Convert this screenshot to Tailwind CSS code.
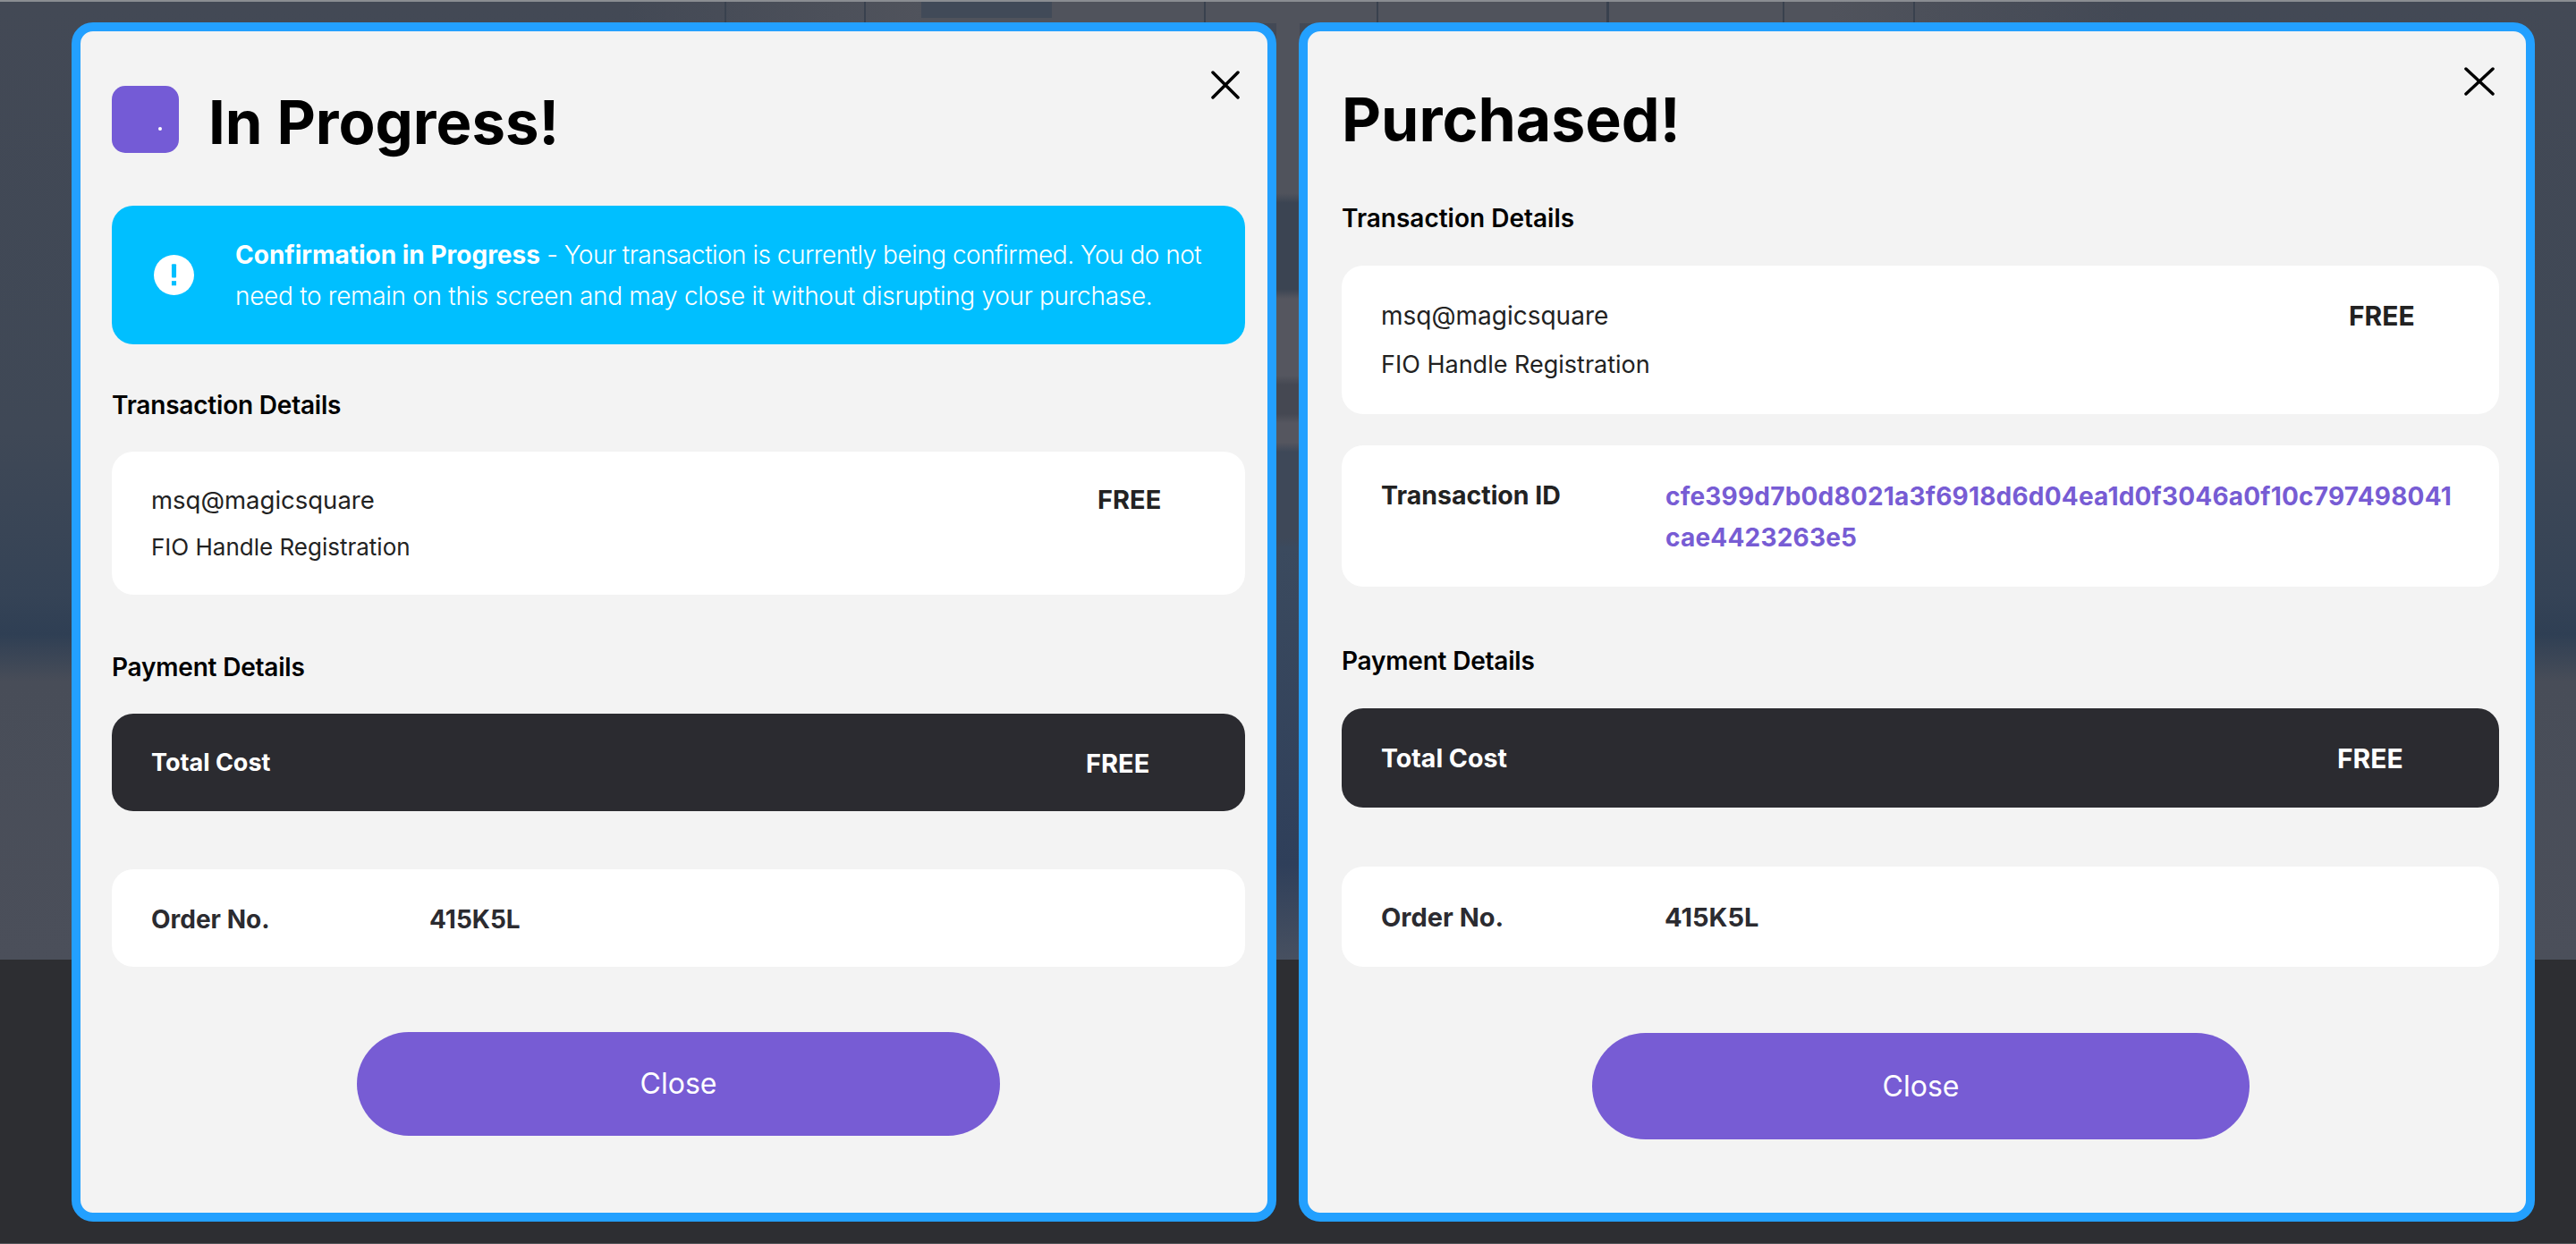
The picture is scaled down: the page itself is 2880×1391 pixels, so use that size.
<!DOCTYPE html>
<html lang="en">
<head>
    <meta charset="UTF-8">
    <title>Magic Square FIO Handle</title>
    <script src="https://cdn.jsdelivr.net/npm/@tailwindcss/browser@4"></script>
</head>
<body class="w-[2880px] h-[1391px] overflow-hidden bg-[#2d2e32] font-['Inter',sans-serif] relative">

    <!-- blurred page behind the modals -->
    <div class="absolute inset-x-0 top-0 h-[1073px] border-t-2 border-[#8a8d92] bg-[linear-gradient(180deg,#434955_0%,#3f4856_45%,#354356_62%,#2f3f54_66%,#484d58_71%,#4b4f5a_100%)]"></div>
    <div class="absolute left-[700px] right-[500px] top-[2px] h-[24px] bg-[linear-gradient(90deg,transparent,#50535c_20%,#50535c_80%,transparent)]"></div>
    <div class="absolute left-[1427px] w-[26px] top-[2px] h-[1071px] bg-[linear-gradient(180deg,#50535c_0%,#50535c_20%,#3b4452_21%,#3b4452_30%,#55565f_31%,#55565f_39%,#454852_40%,#454852_43%,#55565f_44%,#55565f_46%,#3e4858_47%,#3e4858_56%,#3b4a5e_57%,#2f3f5a_90%,#475060_100%)]"></div>
    <div class="absolute bottom-0 inset-x-0 h-px bg-[#55575b]"></div>

    <!-- bits of the page that show above the modals -->
    <div class="absolute left-[1030px] top-[2px] w-[146px] h-[18px] bg-[#414a58]"></div>
    <div class="absolute left-[810px] top-[2px] w-[2px] h-[24px] bg-[#39414e]"></div>
    <div class="absolute left-[966px] top-[2px] w-[2px] h-[24px] bg-[#39414e]"></div>
    <div class="absolute left-[1346px] top-[2px] w-[2px] h-[24px] bg-[#39414e]"></div>
    <div class="absolute left-[1539px] top-[2px] w-[2px] h-[24px] bg-[#39414e]"></div>
    <div class="absolute left-[1796px] top-[2px] w-[3px] h-[24px] bg-[#39414e]"></div>
    <div class="absolute left-[1993px] top-[2px] w-[2px] h-[24px] bg-[#39414e]"></div>
    <div class="absolute left-[2139px] top-[2px] w-[2px] h-[24px] bg-[#39414e]"></div>

    <div class="relative flex pl-[80px] pt-[25px] gap-[25px]">

        <!-- left modal -->
        <div class="relative w-[1347px] h-[1341px] border-[10px] border-[#23a0ff] rounded-[24px] bg-[#f3f3f3] pl-[35px] pr-[25px] pt-[60px]">
            <svg class="absolute top-[44px] right-[31px] w-[32px] h-[32px]" viewBox="0 0 32 32" fill="none" stroke="#000" stroke-width="3.5" stroke-linecap="round"><path d="M2 2L30 30M30 2L2 30"/></svg>

            <div class="flex items-center gap-[33px] h-[76px]">
                <div class="relative w-[75px] h-[75px] rounded-[15px] bg-[#745bd6]">
                    <span class="absolute left-[52px] top-[46px] w-[4px] h-[4px] rounded-full bg-white"></span>
                </div>
                <h1 class="pt-[6px] text-[67px] leading-none font-bold text-black">In Progress!</h1>
            </div>

            <div class="mt-[59px] h-[155px] rounded-[24px] bg-[#00bfff] flex items-center pl-[47px] text-white">
                <svg class="w-[45px] h-[45px] shrink-0" viewBox="0 0 44 44"><circle cx="22" cy="22" r="22" fill="#fff"/><rect x="19.5" y="10" width="5" height="15" rx="1" fill="#00bfff"/><rect x="19.5" y="28.500" width="5" height="5" fill="#00bfff"/></svg>
                <p class="ml-[46px] text-[28px] leading-[46px] font-light whitespace-nowrap"><span class="tracking-[-0.5px]"><span class="font-bold tracking-normal">Confirmation in Progress</span> - Your transaction is currently being confirmed. You do not</span><br><span class="tracking-[-0.3px]">need to remain on this screen and may close it without disrupting your purchase.</span></p>
            </div>

            <h2 class="mt-[51px] text-[28px] leading-[34px] font-semibold text-black tracking-[-0.2px]">Transaction Details</h2>
            <div class="mt-[35px] h-[160px] rounded-[24px] bg-white pl-[44px] pt-[36px] flex">
                <div class="w-[1058px] text-[#222]">
                    <p class="text-[27.5px] leading-[36px]">msq@magicsquare</p>
                    <p class="mt-[18px] text-[26px] leading-[34px]">FIO Handle Registration</p>
                </div>
                <p class="text-[29px] leading-[36px] font-bold text-[#222]">FREE</p>
            </div>

            <h2 class="mt-[64px] text-[28px] leading-[34px] font-semibold text-black tracking-[-0.2px]">Payment Details</h2>
            <div class="mt-[35px] h-[109px] rounded-[24px] bg-[#2b2b30] pl-[44px] pt-[2px] flex items-center text-white font-bold">
                <p class="w-[1045px] text-[27px]">Total Cost</p>
                <p class="text-[29px]">FREE</p>
            </div>

            <div class="mt-[65px] h-[109px] rounded-[24px] bg-white pl-[44px] pt-[2px] flex items-center text-[#2b2b30] font-bold text-[28px]">
                <p class="w-[311px]">Order No.</p>
                <p>415K5L</p>
            </div>

            <button class="block mt-[73px] ml-[274px] w-[719px] h-[116px] rounded-full bg-[#775cd4] text-white text-[32px]">Close</button>
        </div>

        <!-- right modal -->
        <div class="relative w-[1382px] h-[1341px] border-[10px] border-[#23a0ff] rounded-[24px] bg-[#f3f3f3] pl-[38px] pr-[30px] pt-[60px]">
            <svg class="absolute top-[40px] right-[35px] w-[34px] h-[32px]" viewBox="0 0 34 32" fill="none" stroke="#000" stroke-width="3.5" stroke-linecap="round"><path d="M2 2L32 30M32 2L2 30"/></svg>

            <h1 class="text-[68px] leading-[76px] font-bold text-black">Purchased!</h1>

            <h2 class="mt-[56px] text-[28px] leading-[34px] font-semibold text-black">Transaction Details</h2>
            <div class="mt-[36px] h-[166px] rounded-[24px] bg-white pl-[44px] pt-[38px] flex">
                <div class="w-[1082px] text-[#222]">
                    <p class="text-[28px] leading-[36px]">msq@magicsquare</p>
                    <p class="mt-[20px] text-[27px] leading-[34px]">FIO Handle Registration</p>
                </div>
                <p class="text-[30px] leading-[36px] font-bold text-[#222]">FREE</p>
            </div>
            <div class="mt-[35px] h-[158px] rounded-[24px] bg-white pl-[44px] pt-[38px] flex">
                <p class="w-[318px] shrink-0 text-[28.500px] leading-[36px] font-bold text-[#222]">Transaction ID</p>
                <p class="whitespace-nowrap text-[28px] leading-[46px] font-bold text-[#775cd4] -mt-[4px] tracking-[0.2px]">cfe399d7b0d8021a3f6918d6d04ea1d0f3046a0f10c797498041<br>cae4423263e5</p>
            </div>

            <h2 class="mt-[66px] text-[28px] leading-[34px] font-semibold text-black tracking-[-0.2px]">Payment Details</h2>
            <div class="mt-[36px] h-[111px] rounded-[24px] bg-[#2b2b30] pl-[44px] pt-[2px] flex items-center text-white font-bold">
                <p class="w-[1069px] text-[28.500px]">Total Cost</p>
                <p class="text-[30px]">FREE</p>
            </div>

            <div class="mt-[66px] h-[112px] rounded-[24px] bg-white pl-[44px] pt-[2px] flex items-center text-[#2b2b30] font-bold text-[29px]">
                <p class="w-[317px]">Order No.</p>
                <p>415K5L</p>
            </div>

            <button class="block mt-[74px] ml-[280px] w-[735px] h-[119px] rounded-full bg-[#775cd4] text-white text-[32px]">Close</button>
        </div>
    </div>

</body>
</html>
